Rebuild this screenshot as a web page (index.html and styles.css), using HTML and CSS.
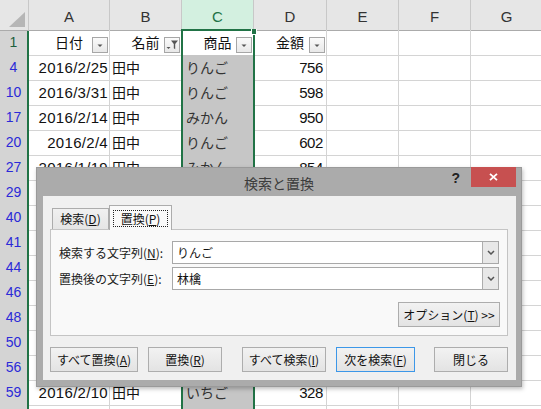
FILE: index.html
```html
<!DOCTYPE html>
<html lang="ja">
<head>
<meta charset="utf-8">
<title>検索と置換</title>
<link rel="stylesheet" href="styles.css">
</head>
<body>
<div class="sheet">
  <div class="row hdr">
    <div class="corner"><span class="tri"></span></div>
    <div class="ch">A</div><div class="ch">B</div><div class="ch sel">C</div><div class="ch">D</div><div class="ch">E</div><div class="ch">F</div><div class="ch last">G</div>
  </div>

  <div class="row">
    <div class="rh first">1</div>
    <div class="c head j">日付<span class="fb"><svg width="14" height="14" viewBox="0 0 14 14"><path d="M4.5 6.5h5l-2.5 2.5z" fill="#555"/></svg></span></div>
    <div class="c head j">名前<span class="fb"><svg width="14" height="14" viewBox="0 0 14 14"><path d="M1.5 9h4l-2 2z" fill="#555"/><path d="M6 2.5h7l-2.8 3.4v5.3l-1.4-0.9v-4.4z" fill="#555"/></svg></span></div>
    <div class="c head j act">商品<span class="fb"><svg width="14" height="14" viewBox="0 0 14 14"><path d="M4.5 6.5h5l-2.5 2.5z" fill="#555"/></svg></span></div>
    <div class="c head j">金額<span class="fb"><svg width="14" height="14" viewBox="0 0 14 14"><path d="M4.5 6.5h5l-2.5 2.5z" fill="#555"/></svg></span></div>
    <div class="c"></div><div class="c"></div><div class="c"></div>
  </div>

  <div class="row"><div class="rh">4</div><div class="c d">2016/2/25</div><div class="c j">田中</div><div class="c j s">りんご</div><div class="c n">756</div><div class="c"></div><div class="c"></div><div class="c"></div></div>
  <div class="row"><div class="rh">10</div><div class="c d">2016/3/31</div><div class="c j">田中</div><div class="c j s">りんご</div><div class="c n">598</div><div class="c"></div><div class="c"></div><div class="c"></div></div>
  <div class="row"><div class="rh">17</div><div class="c d">2016/2/14</div><div class="c j">田中</div><div class="c j s">みかん</div><div class="c n">950</div><div class="c"></div><div class="c"></div><div class="c"></div></div>
  <div class="row"><div class="rh">20</div><div class="c d">2016/2/4</div><div class="c j">田中</div><div class="c j s">りんご</div><div class="c n">602</div><div class="c"></div><div class="c"></div><div class="c"></div></div>
  <div class="row"><div class="rh">27</div><div class="c d">2016/1/19</div><div class="c j">田中</div><div class="c j s">みかん</div><div class="c n">854</div><div class="c"></div><div class="c"></div><div class="c"></div></div>
  <div class="row"><div class="rh">29</div><div class="c d"></div><div class="c j"></div><div class="c j s"></div><div class="c n"></div><div class="c"></div><div class="c"></div><div class="c"></div></div>
  <div class="row"><div class="rh">40</div><div class="c d"></div><div class="c j"></div><div class="c j s"></div><div class="c n"></div><div class="c"></div><div class="c"></div><div class="c"></div></div>
  <div class="row"><div class="rh">41</div><div class="c d"></div><div class="c j"></div><div class="c j s"></div><div class="c n"></div><div class="c"></div><div class="c"></div><div class="c"></div></div>
  <div class="row"><div class="rh">44</div><div class="c d"></div><div class="c j"></div><div class="c j s"></div><div class="c n"></div><div class="c"></div><div class="c"></div><div class="c"></div></div>
  <div class="row"><div class="rh">46</div><div class="c d"></div><div class="c j"></div><div class="c j s"></div><div class="c n"></div><div class="c"></div><div class="c"></div><div class="c"></div></div>
  <div class="row"><div class="rh">48</div><div class="c d"></div><div class="c j"></div><div class="c j s"></div><div class="c n"></div><div class="c"></div><div class="c"></div><div class="c"></div></div>
  <div class="row"><div class="rh">50</div><div class="c d"></div><div class="c j"></div><div class="c j s"></div><div class="c n"></div><div class="c"></div><div class="c"></div><div class="c"></div></div>
  <div class="row"><div class="rh">56</div><div class="c d"></div><div class="c j"></div><div class="c j s"></div><div class="c n"></div><div class="c"></div><div class="c"></div><div class="c"></div></div>
  <div class="row"><div class="rh">59</div><div class="c d">2016/2/10</div><div class="c j">田中</div><div class="c j s">いちご</div><div class="c n">328</div><div class="c"></div><div class="c"></div><div class="c"></div></div>
  <div class="row"><div class="rh"></div><div class="c d"></div><div class="c j"></div><div class="c j s"></div><div class="c n"></div><div class="c"></div><div class="c"></div><div class="c"></div></div>

  <div class="selbox"><span class="handle"></span></div>
</div>

<div class="dialog">
  <div class="titlebar">
    <span class="title">検索と置換</span>
    <span class="help">?</span>
    <span class="close"><svg width="9" height="8" viewBox="0 0 9 8"><path d="M1 0.8l7 6.4M8 0.8l-7 6.4" stroke="#fff" stroke-width="1.8"/></svg></span>
  </div>
  <div class="client">
    <div class="tabs">
      <div class="tab">検索(<u>D</u>)</div>
      <div class="tab active"><span class="focus">置換(<u>P</u>)</span></div>
    </div>
    <div class="panel">
      <div class="field">
        <span class="label">検索する文字列(<u>N</u>):</span>
        <div class="combo"><span class="val">りんご</span><span class="drop"><svg width="8" height="5" viewBox="0 0 8 5"><path d="M1 1l3 3 3-3" fill="none" stroke="#555" stroke-width="1.5"/></svg></span></div>
      </div>
      <div class="field">
        <span class="label">置換後の文字列(<u>E</u>):</span>
        <div class="combo"><span class="val">林檎</span><span class="drop"><svg width="8" height="5" viewBox="0 0 8 5"><path d="M1 1l3 3 3-3" fill="none" stroke="#555" stroke-width="1.5"/></svg></span></div>
      </div>
      <div class="optrow"><span class="btn opt">オプション(<u>T</u>) &gt;&gt;</span></div>
    </div>
    <div class="buttons">
      <span class="btn b1">すべて置換(<u>A</u>)</span>
      <span class="btn b2">置換(<u>R</u>)</span>
      <span class="btn b3 wide">すべて検索(<u>I</u>)</span>
      <span class="btn b4 focused">次を検索(<u>F</u>)</span>
      <span class="btn b5 wide2">閉じる</span>
    </div>
  </div>
</div>
</body>
</html>
```

FILE: styles.css
```css
html, body {
  margin: 0;
  padding: 0;
  background: #ffffff;
  overflow: hidden;
}
body {
  width: 541px;
  height: 409px;
  position: relative;
  font-family: "Liberation Sans", "Noto Sans CJK JP", sans-serif;
}

.sheet {
  position: relative;
  width: 541px;
  height: 409px;
  overflow: hidden;
}
.row {
  display: grid;
  grid-template-columns: 29px 81px 72px 72px 73px 72px 72px 72px;
  height: 25px;
}
.row > div {
  box-sizing: border-box;
}
.hdr {
  height: 30px;
}
.corner {
  background: #e6e6e6;
  border-right: 1px solid #c8c8c8;
  border-bottom: 1px solid #ababab;
  position: relative;
}
.tri {
  position: absolute;
  right: 3px;
  bottom: 3px;
  width: 16px;
  height: 15px;
  background: #b6b6b6;
  clip-path: polygon(100% 0, 100% 100%, 0 100%);
}
.ch {
  background: #e6e6e6;
  border-right: 1px solid #c8c8c8;
  border-bottom: 1px solid #ababab;
  color: #333;
  font-size: 15px;
  line-height: 26px;
  padding-top: 4px;
  text-align: center;
}
.ch.sel {
  background: #d3f0e0;
  color: #217346;
}
.rh {
  background: #d4d4d4;
  border-right: 2px solid #217346;
  border-bottom: 1px solid #e6e6e6;
  color: #2a2ad8;
  font-size: 14px;
  line-height: 25px;
  text-align: center;
}
.rh.first {
  color: #1e5f3c;
}
.c {
  border-right: 1px solid #d4d4d4;
  border-bottom: 1px solid #d4d4d4;
  color: #111;
  font-size: 15px;
  line-height: 25px;
  padding: 0 2px;
  white-space: nowrap;
  overflow: hidden;
  position: relative;
}
.j {
  font-family: "Noto Sans CJK JP", sans-serif;
  font-size: 14px;
}
.d {
  text-align: right;
  letter-spacing: 0.3px;
  padding-right: 1px;
}
.n {
  text-align: right;
  letter-spacing: -0.4px;
  padding-right: 3px;
}
.s {
  background: #c6c6c6;
  color: #333;
  border-bottom-color: #b8b8b8;
  padding-left: 4px;
}
.head {
  text-align: center;
  padding: 0;
}
.act {
  background: #ffffff;
}
.fb {
  position: absolute;
  right: 1px;
  top: 7px;
  width: 16px;
  height: 16px;
  box-sizing: border-box;
  border: 1px solid #a6a6a6;
  background: linear-gradient(#fafafa, #e8e8e8);
  display: flex;
  align-items: center;
  justify-content: center;
}
.fb svg { display: block; }

.selbox {
  position: absolute;
  left: 181px;
  top: 29px;
  width: 74px;
  height: 400px;
  box-sizing: border-box;
  border: 2px solid #217346;
  pointer-events: none;
}
.handle {
  position: absolute;
  right: -4px;
  top: -2px;
  width: 6px;
  height: 6px;
  background: #217346;
  border: 1px solid #fff;
  border-top: none;
  box-sizing: border-box;
}

/* dialog */
.dialog {
  position: absolute;
  left: 36px;
  top: 167px;
  width: 486px;
  height: 220px;
  box-sizing: border-box;
  background: #ababab;
  border: 1px solid #9a9a9a;
  box-shadow: 1px 2px 4px rgba(0,0,0,0.25);
  display: flex;
  flex-direction: column;
  font-family: "Liberation Sans", "Noto Sans CJK JP", sans-serif;
  font-size: 12px;
  color: #111;
}
.titlebar {
  height: 28px;
  flex: none;
  position: relative;
  display: flex;
  justify-content: center;
  align-items: center;
}
.title {
  font-family: "Noto Sans CJK JP", sans-serif;
  font-size: 14px;
  color: #3c3c3c;
  padding-top: 2px;
}
.help {
  position: absolute;
  right: 61px;
  top: 2px;
  font-weight: bold;
  font-size: 14px;
  color: #222;
}
.close {
  position: absolute;
  right: 5px;
  top: -1px;
  width: 45px;
  height: 20px;
  background: #c75050;
  display: flex;
  align-items: center;
  justify-content: center;
}
.close svg { display: block; }
.client {
  flex: 1;
  margin: 0 5px 6px 6px;
  background: #f0f0f0;
  display: flex;
  flex-direction: column;
  padding: 9px 8px 0 7px;
}
.tabs {
  display: flex;
  align-items: flex-end;
  height: 24px;
  padding-left: 2px;
  position: relative;
  z-index: 1;
}
.tab {
  height: 21px;
  box-sizing: border-box;
  border: 1px solid #acacac;
  border-bottom: none;
  background: linear-gradient(#f0f0f0, #e5e5e5);
  padding: 0 7px;
  line-height: 20px;
  font-family: "Noto Sans CJK JP", sans-serif;
  font-size: 12px;
  width: 57px;
  text-align: center;
}
.tab.active {
  height: 25px;
  margin-bottom: -1px;
  width: 63px;
  background: #f9f9f9;
  border-left: 1px solid #acacac;
  margin-left: 0;
  padding: 4px 3px 0;
}
.focus {
  display: block;
  border: 1px dotted #222;
  line-height: 15px;
}
.panel {
  height: 107px;
  box-sizing: border-box;
  border: 1px solid #c4c4c4;
  background: #f9f9f9;
  padding: 11px 7px 0 8px;
  display: flex;
  flex-direction: column;
}
.field {
  display: flex;
  align-items: center;
  height: 23px;
  margin-bottom: 3px;
}
.label {
  width: 113px;
  font-family: "Noto Sans CJK JP", sans-serif;
  font-size: 12px;
  color: #1a1a1a;
}
.combo {
  flex: none;
  width: 327px;
  height: 23px;
  box-sizing: border-box;
  border: 1px solid #a8a8a8;
  background: #fff;
  display: flex;
  align-items: stretch;
}
.val {
  flex: 1;
  padding-left: 4px;
  line-height: 21px;
  font-family: "Noto Sans CJK JP", sans-serif;
  font-size: 12px;
}
.drop {
  width: 16px;
  box-sizing: border-box;
  border-left: 1px solid #adadad;
  background: #e8e8e8;
  display: flex;
  align-items: center;
  justify-content: center;
}
.drop svg { display: block; }
.optrow {
  display: flex;
  justify-content: flex-end;
  margin-top: 9px;
}
.btn {
  box-sizing: border-box;
  height: 25px;
  border: 1px solid #adadad;
  background: linear-gradient(#f2f2f2, #e3e3e3);
  font-family: "Noto Sans CJK JP", sans-serif;
  font-size: 12px;
  line-height: 23px;
  text-align: center;
  color: #111;
  display: block;
}
.opt {
  width: 102px;
}
.buttons {
  display: flex;
  gap: 10px;
  margin-top: 11px;
}
.b1 { width: 88px; }
.b2 { width: 74px; }
.b3 { width: 84px; }
.b4 { width: 79px; }
.b5 { width: 74px; }
.wide { margin-left: 10px; }
.wide2 { margin-left: 9px; }
.focused {
  border-color: #3c97e8;
}
u {
  text-decoration: underline;
  text-underline-offset: 1px;
}
```
